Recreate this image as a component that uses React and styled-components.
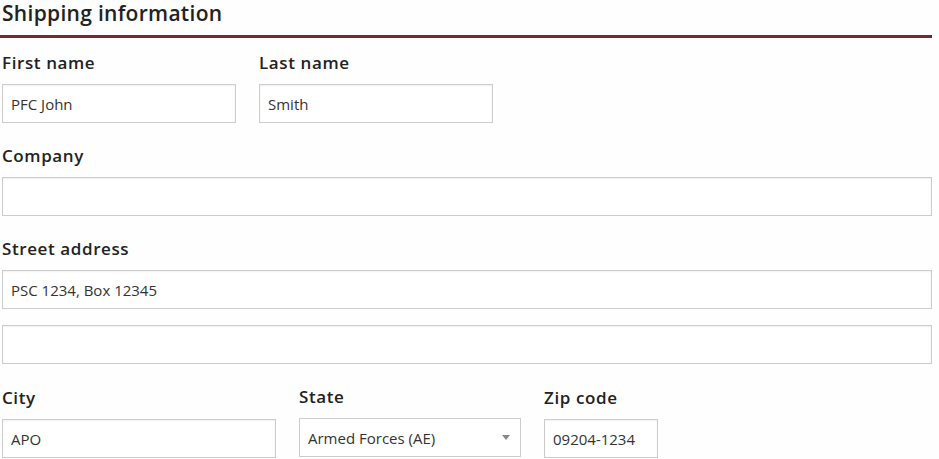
import React from "react";
import styled, { createGlobalStyle } from "styled-components";

const Global = createGlobalStyle`
  html, body {
    margin: 0;
    padding: 0;
    background: #fefefe;
  }
  body {
    font-family: "Open Sans", "Noto Sans", sans-serif;
    color: #222;
  }
`;

const Form = styled.form`
  width: 932px;
  padding: 0 0 0 2px;
  box-sizing: border-box;
`;

const Heading = styled.h2`
  margin: 0 0 17px -2px;
  padding: 0 0 9px 2px;
  font-size: 21px;
  line-height: 26px;
  font-weight: 600;
  letter-spacing: 0.3px;
  color: #222;
  border-bottom: 3px solid #722a33;
`;

const Row = styled.div`
  display: flex;
  gap: 23px;
  margin-bottom: ${(p) => p.$space ?? 25}px;
`;

const Field = styled.div`
  display: flex;
  flex-direction: column;
  width: ${(p) => (p.$width ? `${p.$width}px` : "100%")};
  margin-top: ${(p) => (p.$lift ? "-1px" : "0")};
`;

const Label = styled.label`
  font-size: 17px;
  line-height: 16px;
  font-weight: 600;
  letter-spacing: 0.6px;
  color: #222;
  margin-bottom: 13px;
`;

const Input = styled.input`
  height: 39px;
  box-sizing: border-box;
  border: 1px solid #cccccc;
  box-shadow: inset 0 1px 2px rgba(0, 0, 0, 0.06);
  background: #fff;
  padding: 0 8px;
  font-family: inherit;
  font-size: 15px;
  color: #333;
  outline: none;
  width: 100%;
`;

const SelectWrap = styled.div`
  position: relative;
  height: 39px;
`;

const Select = styled.select`
  appearance: none;
  height: 39px;
  width: 100%;
  box-sizing: border-box;
  border: 1px solid #cccccc;
  background: #fff;
  padding: 0 8px;
  font-family: inherit;
  font-size: 15px;
  color: #333;
  outline: none;
`;

const Caret = styled.span`
  position: absolute;
  right: 11px;
  top: 17px;
  width: 0;
  height: 0;
  border-left: 4px solid transparent;
  border-right: 4px solid transparent;
  border-top: 5px solid #888;
  pointer-events: none;
`;

export default function App() {
  return (
    <>
      <Global />
      <Form>
        <Heading>Shipping information</Heading>
        <Row>
          <Field $width={234}>
            <Label>First name</Label>
            <Input defaultValue="PFC John" />
          </Field>
          <Field $width={234}>
            <Label>Last name</Label>
            <Input defaultValue="Smith" />
          </Field>
        </Row>
        <Row>
          <Field>
            <Label>Company</Label>
            <Input defaultValue="" />
          </Field>
        </Row>
        <Row $space={16}>
          <Field>
            <Label>Street address</Label>
            <Input defaultValue="PSC 1234, Box 12345" />
          </Field>
        </Row>
        <Row $space={26}>
          <Field>
            <Input defaultValue="" aria-label="Street address line 2" />
          </Field>
        </Row>
        <Row $space={0}>
          <Field $width={274}>
            <Label>City</Label>
            <Input defaultValue="APO" />
          </Field>
          <Field $width={222} $lift>
            <Label>State</Label>
            <SelectWrap>
              <Select defaultValue="AE">
                <option value="AE">Armed Forces (AE)</option>
              </Select>
              <Caret />
            </SelectWrap>
          </Field>
          <Field $width={114}>
            <Label>Zip code</Label>
            <Input defaultValue="09204-1234" />
          </Field>
        </Row>
      </Form>
    </>
  );
}
